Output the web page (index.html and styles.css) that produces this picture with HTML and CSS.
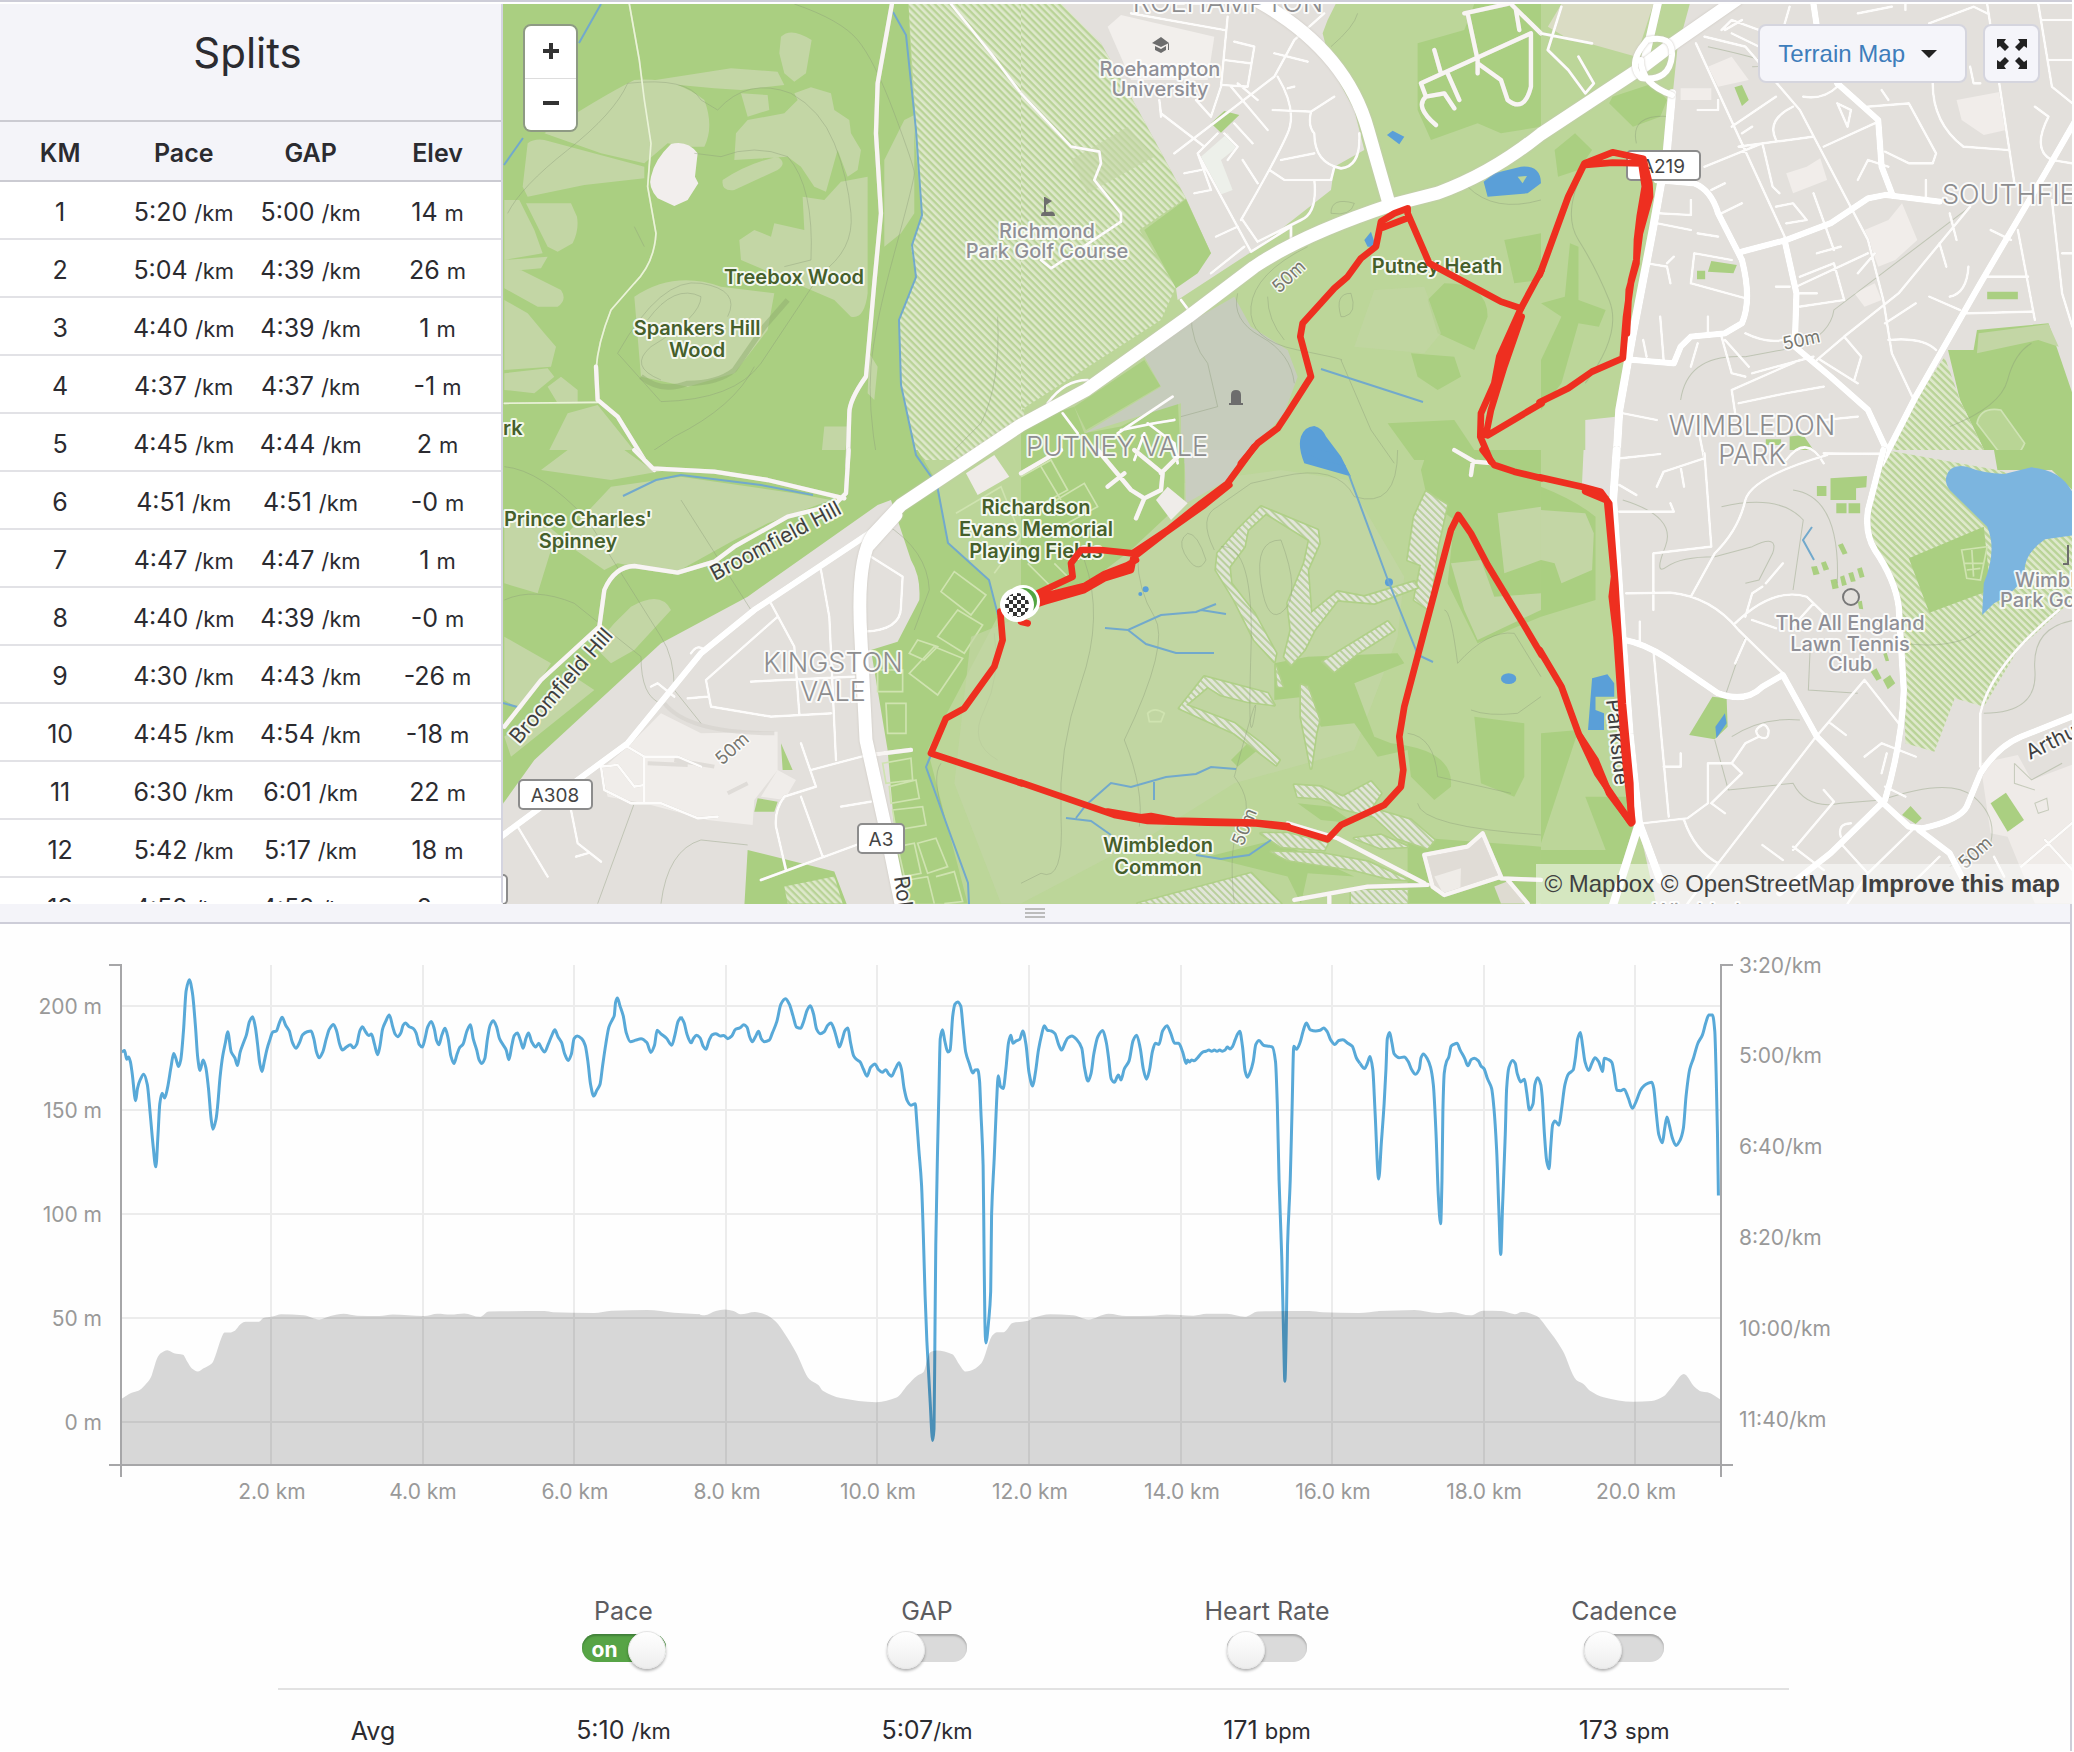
FILE: index.html
```html
<!DOCTYPE html>
<html lang="en">
<head>
<meta charset="utf-8">
<meta name="viewport" content="width=device-width, initial-scale=1">
<title>Splits</title>
<link rel="stylesheet" href="styles.css">
</head>
<body>
<main class="activity">
  <div class="overview">
    <section class="splits">
      <h1 class="splits-title">Splits</h1>
      <table class="splits-table">
        <thead><tr><th scope="col">KM</th><th scope="col">Pace</th><th scope="col">GAP</th><th scope="col">Elev</th></tr></thead>
        <tbody>
          <tr><td>1</td><td>5:20 <small>/km</small></td><td>5:00 <small>/km</small></td><td>14 <small>m</small></td></tr>
          <tr><td>2</td><td>5:04 <small>/km</small></td><td>4:39 <small>/km</small></td><td>26 <small>m</small></td></tr>
          <tr><td>3</td><td>4:40 <small>/km</small></td><td>4:39 <small>/km</small></td><td>1 <small>m</small></td></tr>
          <tr><td>4</td><td>4:37 <small>/km</small></td><td>4:37 <small>/km</small></td><td>-1 <small>m</small></td></tr>
          <tr><td>5</td><td>4:45 <small>/km</small></td><td>4:44 <small>/km</small></td><td>2 <small>m</small></td></tr>
          <tr><td>6</td><td>4:51 <small>/km</small></td><td>4:51 <small>/km</small></td><td>-0 <small>m</small></td></tr>
          <tr><td>7</td><td>4:47 <small>/km</small></td><td>4:47 <small>/km</small></td><td>1 <small>m</small></td></tr>
          <tr><td>8</td><td>4:40 <small>/km</small></td><td>4:39 <small>/km</small></td><td>-0 <small>m</small></td></tr>
          <tr><td>9</td><td>4:30 <small>/km</small></td><td>4:43 <small>/km</small></td><td>-26 <small>m</small></td></tr>
          <tr><td>10</td><td>4:45 <small>/km</small></td><td>4:54 <small>/km</small></td><td>-18 <small>m</small></td></tr>
          <tr><td>11</td><td>6:30 <small>/km</small></td><td>6:01 <small>/km</small></td><td>22 <small>m</small></td></tr>
          <tr><td>12</td><td>5:42 <small>/km</small></td><td>5:17 <small>/km</small></td><td>18 <small>m</small></td></tr>
          <tr><td>13</td><td>4:52 <small>/km</small></td><td>4:52 <small>/km</small></td><td>2 <small>m</small></td></tr>
        </tbody>
      </table>
    </section>
    <section class="map" aria-label="Route map">
      <svg class="map-canvas" viewBox="502 4 1569 900" preserveAspectRatio="xMidYMid slice" aria-hidden="true">
        <defs>
          <pattern id="hatch" width="15" height="15" patternUnits="userSpaceOnUse" patternTransform="rotate(-45)"><rect width="15" height="15" fill="#b9d397"/><rect width="8" height="15" fill="#dee8cb"/></pattern>
          <pattern id="fairway" width="15" height="15" patternUnits="userSpaceOnUse" patternTransform="rotate(-45)"><rect width="15" height="15" fill="#b9cf9c"/><rect width="9" height="15" fill="#e1e5d8"/></pattern>
          <pattern id="check" width="8" height="8" patternUnits="userSpaceOnUse"><rect width="8" height="8" fill="#fff"/><path d="M0 0h4v4H0zM4 4h4v4H4z" fill="#333"/></pattern>
        </defs>
        <rect x="500" width="1574" height="908" fill="#bcd699"/>

        <!-- Land cover -->
        <g transform="translate(500 0) scale(.3333)">
          <path class="wood" d="M0 0H1222L1240 400 1262 650 1230 740 1245 830 1195 960 1200 1150 1250 1390H0z"/>
          <path class="pale" d="M130 400Q300 290 400 240 520 230 610 300 640 380 610 440L560 440 500 430 430 490 300 460zM80 430Q100 415 130 420L430 500V535L250 555 80 590 65 560zM75 610H210L228 650Q235 690 215 730L170 755 140 740zM10 600H55L100 690 125 760 10 780zM10 780 140 770 120 805 10 815zM10 810 60 810 180 870Q200 900 170 920L110 920 10 865zM10 900 80 940 130 1000 165 1040 150 1100 10 1110zM10 1120 140 1105 160 1130 100 1180 10 1170zM140 1160 180 1130 230 1170V1210L170 1210zM130 1380 200 1240 290 1215 430 1390zM430 245 690 205 830 215 850 255 720 270 640 265zM840 110Q870 80 932 120L915 220 880 245 850 220 835 160zM720 280 800 285 805 330 740 350zM705 400 740 360 850 340 890 300 880 280 930 262 990 280 1000 330 1045 360 1050 400 1080 450 1070 510 1040 530 1010 450 975 575 940 560 900 500 860 470 700 480zM665 540Q740 490 830 470 860 490 830 510L700 570Q660 575 665 540zM1020 545 1100 530V880Q1090 960 1050 950L1000 900 930 870 720 780 715 720 760 690 810 710 820 670 910 690 905 590 970 600zM400 890Q520 810 660 860L820 880 800 990 700 1120 560 1160 420 1130zM1150 480 1210 360 1240 345V640L1200 700 1150 740zM960 1380 970 1280 1040 1280 1030 1390zM1105 1060 1130 1100 1120 1200 1100 1180z"/>
          <path class="hill" d="M420 1130Q480 1180 560 1150 650 1150 700 1110L790 980 860 900"/>
          <path d="M510 432Q560 420 590 460L582 530 592 550 560 600 520 618 470 595Q440 560 450 530 460 480 510 432z" fill="#f2eeed"/>
          <path fill="url(#hatch)" d="M1222 0H1570V1290L1390 1380H1250L1200 1150 1195 960 1245 830 1230 740 1262 650z"/>
          <path class="contour" d="M880 12Q1020 60 1070 120T1180 340 1240 520 1180 760 1110 1100 1130 1390M20 640Q60 560 200 450T380 250Q560 230 600 300L650 330Q740 230 870 280 960 330 1000 430T1050 640 960 820L780 1090Q700 1200 480 1205L350 1060Q480 830 600 850T680 950M580 460 660 470Q760 430 860 470 940 560 930 780L850 800M440 960Q520 850 600 890 600 950 450 1040 380 1100 480 1140M430 1370 520 1310Q700 1220 760 1100M1490 950Q1500 1150 1440 1270L1360 1350M400 680 430 740"/>
        </g>
        <g transform="translate(1020 0) scale(.3333)">
          <path fill="url(#hatch)" d="M0 0H120L240 130 330 290 495 595 355 690 465 860 420 960 0 1230z"/>
          <path class="town" d="M110 0H950L920 60 905 100 930 200 1000 330 1030 450 940 500 930 570 700 750 470 900 465 865 570 760 495 595 330 290 240 130z"/>
          <path class="wood" d="M370 690 495 598 570 760 530 820 465 865zM570 370 610 333 655 345 600 398zM1190 130 1330 90 1360 12H1560V380L1440 400 1370 370 1230 420 1190 330zM1270 850Q1400 850 1400 950L1360 1050 1250 1000 1220 900zM1170 1060 1300 1070 1320 1130 1250 1170 1190 1130zM1100 1270 1300 1260 1380 1380H1180zM1450 720 1560 700V840L1480 850zM0 1270 160 1220 190 1300 300 1280 470 1190 480 1390H0z"/>
          <path class="pale" d="M1060 870 1210 860 1260 1000 1210 1060 1000 1040zM150 480 320 380 400 470 200 580z" opacity=".6"/>
          <path d="M640 890 500 970 370 1070 420 1160 190 1300 480 1210V1390H660L790 1240 830 1130 800 1050 690 980z" fill="#c6ccbc"/>
          <path class="wood" d="M370 1080 418 1158 195 1290 160 1220z"/>
          <path d="M260 80 300 45 580 110 560 240H330z" fill="#f2efec"/><path d="M540 470 620 400 650 440 600 480 635 570 595 585z" fill="#edf0ea"/>
          <path class="water" d="M1098 405 1115 392 1150 410 1135 433zM1388 545 1420 520 1500 500Q1560 495 1560 550L1520 580 1400 590zM1030 720 1050 695 1065 740 1040 740zM840 1310Q850 1280 880 1278 905 1285 915 1310L960 1370 990 1430 850 1390Q830 1340 840 1310z"/>
          <path d="M1490 530 1518 528 1505 550z" fill="#bcd699"/>
          <path class="contour" d="M650 880Q630 960 720 1010T820 1150M860 740Q700 820 690 920T830 1050 960 1080L1050 1290 1120 1390M740 890Q740 960 790 1020M1010 40Q1000 80 930 140M1340 560Q1420 640 1560 600M510 940Q510 1030 560 1090L590 1220 480 1250M930 640Q930 590 1000 610 990 650 930 640zM960 950Q940 880 990 880 1010 940 970 950z"/>
        </g>
        <g transform="translate(1540 0) scale(.3406 .3333)">
          <path class="town" d="M440 0H1570V1390H130V1260L220 1250 385 300 400 150z"/>
          <path d="M60 12H330L280 170 70 110 20 80z" fill="#dadcc4"/>
          <path class="wood" d="M210 290 330 250 370 300 350 350 270 380 200 310zM40 450 100 400 150 450 110 510 50 530zM85 730 110 740 110 900 190 930 170 980 110 970 60 1150 0 1230V1080L60 950 0 910 70 890zM568 262 590 255 610 300 590 318zM500 783 575 795 565 820 490 815zM458 812H482V838H458zM1310 875H1400V898H1310zM1195 1050 1270 1050 1280 990 1490 970 1560 1180V1390H1320L1230 1200z"/>
          <path class="pale" d="M1280 1060 1285 1000 1490 972 1520 1040 1460 1020z"/>
          <path class="wood" d="M660 1318H705V1335H660zM730 1310 770 1305 800 1350 790 1372 730 1365z"/>
          <path fill="url(#hatch)" d="M1185 1070 1230 1200 1320 1390H1000L1100 1200z"/>
          <path d="M490 200 560 170 610 240 520 260zM720 520 780 500 820 475 840 540 740 580zM1220 300 1350 275 1365 390 1300 405 1235 360zM950 690 1020 660 1060 610 1105 720 1040 780 990 800zM920 880 980 850 1000 900 950 920zM410 265H500V300H410z" fill="#f1edea"/>
          <path class="contour" d="M380 350Q260 340 280 430M130 500Q60 640 110 720T200 900 130 1150M1440 1030Q1390 1060 1370 1140T1200 1280M410 1200Q430 1060 600 1070L760 1040Q850 1000 860 930L1260 620M490 140Q760 200 620 200"/>
          <path d="M1280 1270Q1290 1220 1350 1230L1420 1330Q1400 1380 1360 1370L1340 1350z" fill="#b9d595" stroke="#cfe3b4" stroke-width="5"/>
        </g>
        <g transform="translate(500 450) scale(.3333)">
          <path class="wood" d="M0 0H1250L1310 100 1340 280 1465 390 1490 500 1280 900 1400 1361H1150L1100 600 0 1060z"/>
          <path class="pale" d="M120 60 200 0H370L440 50 500 60 330 90zM330 110 540 80 880 130 990 150 800 220 700 270 520 370 350 340 310 360 180 270zM10 180 120 210 180 260 150 300 110 430 10 400zM390 470Q480 420 510 480L400 600 330 640 280 590 340 520zM10 560 150 640 60 780 10 750zM10 860 220 680 280 720 30 920z"/>
          <path class="town" d="M0 1070 100 930 480 580 740 440 1130 165 1170 150 1230 330Q1260 380 1255 450L1190 575 1110 600 1160 900 1200 1370H0z"/>
          <path d="M480 790 600 850 830 845V960L760 1050 755 1125 620 1110 430 1060 320 1040 300 960 380 890zM780 1040 830 960 885 990 850 1050z" fill="#f0edea"/>
          <path d="M490 760Q560 850 820 850M520 930 640 950M440 940 560 945M680 1030 740 1000" fill="none" stroke="#d3d0cc" stroke-width="12" opacity=".6"/>
          <path class="wood" d="M840 880 875 960H845zM770 1045 830 1055 820 1085H760zM740 1200 1000 1265 1040 1370H730z"/>
          <path fill="url(#hatch)" d="M850 1310 1000 1280 1025 1361H860z"/>
          <path d="M1395 70 1480 15 1525 80 1430 135z" fill="#efebe8"/>
          <path class="contour" d="M10 50Q120 60 260 210L480 560Q520 620 520 720L600 820M10 450Q100 410 220 460L420 620Q420 740 480 760M540 150 750 480M480 1361Q500 1200 600 1170L740 1185M400 1060 290 1361M1150 220Q1280 300 1285 420L1240 540M1320 940Q1290 980 1330 1100M1480 550Q1500 680 1450 780T1490 930"/>
          <path class="pitch" d="M1360 365 1455 435 1410 495 1320 425zM1370 480 1445 525 1390 610 1310 560zM1300 590 1385 625 1310 735 1225 670zM1130 660H1205V725H1130zM1155 760H1215V850H1160zM1145 940 1230 925 1235 990 1155 1000zM1165 1010 1245 990 1255 1045 1170 1060zM1175 1080 1265 1070 1275 1125 1185 1140zM1190 1190 1240 1180 1260 1270 1210 1280zM1250 1180 1305 1165 1340 1250 1280 1270zM1220 1290 1280 1280 1300 1361M1305 1280 1360 1265 1385 1355 1330 1361M1250 570 1310 590 1270 630 1225 610zM1365 190 1500 110 1560 260 1480 370"/>
        </g>
        <g transform="translate(1020 450) scale(.3333)">
          <path class="pale" d="M-150 560 0 500 220 300 480 100 780 60 980 90 1150 380 1130 560 1000 900 640 1000 400 1150 0 1361H-60L-200 1000z" opacity=".7"/>
          <path class="wood" d="M0 0H490V150L330 300 200 400 0 440zM1220 0H1560V500L1370 580 1280 400 1300 210 1220 150 1200 60zM760 640 860 620 1130 610 1150 640 1000 700 1060 860 1110 880Q1300 900 1290 1010L1240 1050 1170 980 1160 900 1070 920 1000 820 900 830 850 740 760 750zM1360 800 1510 820V980L1480 1040 1380 1000zM630 930 690 870 710 900 650 950zM1160 1160 1560 1190V1361H1160zM760 1170 1000 1280 860 1270 840 1361 800 1280 560 1220zM830 1060 930 1070 1000 1120 900 1110z"/>
          <path class="pale" d="M1430 190 1560 170V330L1450 370zM1290 340 1380 330 1420 440 1560 430V480L1370 570 1330 480z"/>
          <path d="M490 0H680L620 90 495 160z" fill="#c9cdc0"/><path d="M405 150 440 110 500 160 450 210z" fill="#efece9"/>
          <g fill="url(#fairway)" stroke="#b0d088" stroke-width="10" stroke-linejoin="round" paint-order="stroke">
            <path d="M350 1361 690 1270 780 1361zM990 1320H1160V1361H990zM1215 125 1278 165 1250 290 1225 480 1180 450 1200 345 1160 330 1180 200z"/>
            <path d="M720 170 890 240 895 280 860 360 870 490 950 425 1030 440 1180 395 1190 412 1060 460 950 450 880 540 850 600 810 645 790 620 810 540 800 460 850 340 865 270 735 190 680 240 670 290 625 350 630 400 700 490 765 610 760 635 700 570 640 450 585 360 590 310 650 240z"/>
            <path d="M905 635 1100 515 1120 540 1010 610 940 665zM840 705 860 710 895 810 885 850 870 955 840 800zM765 650 785 710 770 710zM550 680 740 730 760 765 680 755 600 735 560 710 495 765 640 820 720 880 775 930 765 945 640 850 475 775z"/>
            <path d="M820 1005 900 1010 965 1040 1050 995 1080 1030 1050 1075 1170 1110 1240 1170 1220 1195 1130 1165 1060 1100 960 1075 900 1045 830 1040zM720 1150 800 1150 920 1180 910 1200 780 1190zM750 1205 900 1210 1040 1235 1160 1290 1100 1285 1000 1260 800 1230zM1000 1165 1080 1155 1160 1190 1080 1195z"/>
          </g>
          <path d="M1210 1215 1340 1190 1385 1150 1440 1280 1270 1335 1235 1310z" fill="#e0dcd6"/><path d="M1240 1280 1320 1255 1318 1325 1265 1328z" fill="#efece8"/><path d="M1420 1310 1470 1290 1510 1361H1440z" fill="#dedbd1"/>
          <path class="water" d="M840 0 900 0 940 10 975 48 900 30z"/><ellipse class="water" cx="1463" cy="686" rx="23" ry="16"/><circle class="water" cx="1104" cy="397" r="12"/><circle class="water" cx="374" cy="418" r="9"/><circle class="water" cx="358" cy="432" r="6"/>
          <path class="contour" d="M190 330Q250 500 180 700T120 1100 60 1270L0 1300M350 320Q350 420 400 500T310 870Q370 1020 355 1130M580 300Q530 200 590 170L690 100 780 80Q950 40 1000 140 1130 180 1130 0M780 270Q700 270 720 400T790 480 780 270M600 290Q700 280 690 600T700 800 640 980Q700 1060 660 1120T640 1361M1160 850Q1240 860 1250 980L1470 1030M1270 480Q1290 480 1310 640 1400 540 1480 550L1560 680M1350 780Q1400 800 1490 790L1560 740M1190 1060Q1200 1130 1560 1155M500 250Q530 250 555 330 530 380 490 310 470 270 500 250z"/>
          <path class="pitch" d="M0 80 90 30 140 120 30 180M60 50 120 150M90 160 190 100 230 170 120 230M20 340 100 420M100 340 150 390M380 790Q400 770 430 790L420 815H385z"/>
        </g>
        <g transform="translate(1540 450) scale(.3406 .3333)">
          <path class="town" d="M125 0H1570V1370H340L285 1120 215 300 205 140 120 110z"/>
          <path class="wood" d="M0 110Q100 150 160 200V450L0 500zM0 850 110 840 0 1180zM130 1040 250 1040 270 1130 210 1370H0V1200L190 1200zM850 85 957 78 955 112 925 115V150H850zM810 108H838V138H810zM867 160H897V190H867zM903 160H937V190H903zM503 740 545 745 548 830 510 868 435 855zM1060 1095 1085 1068 1118 1105 1100 1122zM1330 0H1570V130L1500 60 1340 60z"/>
          <path class="wood" d="M793 350 810 348 818 372 800 376zM822 338 836 334 846 358 830 362zM850 390 868 386 874 414 856 418zM878 380 890 376 898 404 884 408zM902 370 916 366 924 394 910 396zM928 356 942 352 950 380 936 384zM872 285 886 280 900 310 886 314zM930 455 942 452 946 478 934 476zM968 665 985 655 1000 685 985 692zM1004 690 1025 675 1040 700 1018 718zM1005 612 1015 608 1022 632 1012 634z"/>
          <path class="pale" d="M0 180 130 190 155 250 150 360 60 400 40 340 0 330z"/>
          <path fill="url(#hatch)" d="M1010 0 1340 60 1570 130V440L1400 600 1300 770 1215 745 1155 905 1070 880 1060 560 1040 420 960 260 970 120z"/>
          <path class="wood" d="M1080 325 1300 230 1320 420 1140 488z"/>
          <path d="M1190 80Q1200 40 1250 50 1300 70 1360 72L1440 52Q1540 60 1570 150V255L1480 268Q1420 310 1420 360 1410 420 1330 460L1295 495 1300 400Q1340 300 1310 230L1200 120Q1185 100 1190 80z" fill="#7cb5df"/>
          <path class="water" d="M150 685 195 673 215 700V740H160V780L185 790V840H138zM512 830 540 790 545 820 515 865z"/>
          <path d="M1290 940 1400 915 1440 990 1570 940V1361H1450L1370 1160 1320 1150z" fill="#efebe8"/><path class="wood" d="M1320 1060 1365 1028 1418 1110 1370 1145z"/>
          <path class="contour" d="M240 150Q400 200 365 290T370 350 510 320L620 290Q700 250 680 310L640 390 600 400M530 170Q700 130 770 210L740 420M740 120Q880 140 870 400M540 740 600 560M510 870 550 1020 740 1000Q780 1080 880 1060L1000 1050Q1200 980 1270 1040T1320 1180L1200 1250M790 600 785 720 930 730M1570 510Q1440 530 1450 660T1300 790M560 860Q650 800 760 810M1060 580Q1220 600 1290 540M1390 940V1000L1450 1020M1390 940 1440 990 1530 940M1450 1060 1485 1045 1490 1080 1460 1090z"/>
          <path class="pitch" d="M1235 300 1310 290 1290 390 1250 385zM1240 340H1300M1250 360 1290 355M1265 300 1270 380"/>
        </g>

        <!-- Streams -->
        <path class="stream" d="M600 4 578 43M522 138 503 165M892 12 905 35 915 130 921 215 911 245 915 277 898 320 900 385 915 455 936 485 947 543 988 580 997 615M930 755 925 767 943 817 967 883 968 904M1320 369 1422 402M1348 475 1388 583 1417 655 1432 662M622 496 655 480 680 475 760 485 812 495M502 703 520 708M1104 628 1127 630 1160 615 1195 612 1215 604M1200 610 1225 614M1127 630 1145 644 1175 653 1213 653M1065 818 1090 821 1110 835M1075 818 1085 805 1110 783 1130 787 1165 777 1195 774 1210 767 1235 769M1153 782V800M1195 855 1220 859 1248 855 1270 840M1811 527 1802 540 1813 560"/>

        <!-- Streets -->
        <g transform="translate(500 0) scale(.3333)" class="roads">
          <path class="track" d="M385 12 415 180 430 300 450 430 440 560 465 700Q460 790 400 850L330 930Q290 1030 285 1110M10 1210 290 1207"/>
          <path class="lane" d="M285 1100 290 1200 350 1250 430 1380 460 1410M1175 0 1130 250 1125 400 1140 640 1120 850 1095 1130Q1045 1200 1045 1240L1040 1400"/>
          <path class="street" d="M1350 12 1470 160 1560 280"/>
        </g>
        <g transform="translate(1020 0) scale(.3333)" class="roads">
          <path class="street" d="M0 280 150 440 235 455 240 490 220 540 300 640 300 665 90 805 60 780M330 40 610 90M620 50 600 260 570 350M640 125 700 140 680 260 605 255M610 180 690 190M460 460 760 230 820 120 910 40M760 160 860 185M415 300 420 340 550 440M770 230Q830 330 800 400T660 660M755 330 870 335 940 290M870 335Q860 380 880 400 880 490 960 505 1020 500 1015 400M780 480 880 460M745 510 790 540 930 540 940 500M880 540Q890 640 840 660L710 725 665 660M525 300 570 350M630 260 740 390M640 370 695 430M530 460 690 755 810 680V720M590 400 530 460 570 570 520 580M490 520 540 510M610 400 650 440 620 480M585 710 650 680M570 820 670 740M820 260 800 265M665 480 710 550M650 250 710 300M420 350 415 300"/>
          <path class="lane" d="M1340 40 1370 180 1370 220M1330 40 1460 12M1470 12 1560 100M1200 250 1530 100V260Q1510 340 1460 300L1440 240 1370 190M1240 150 1260 220M1280 220 1315 300M1200 250 1215 290 1270 280 1300 325M1215 290Q1180 320 1245 375M1485 30 1495 90"/>
          <path class="street" d="M80 1210Q130 1140 200 1140M125 1240 170 1300M290 1300 455 1190M300 1290 400 1270 460 1260M380 1270 460 1330 470 1390M370 1300 340 1380M480 900 510 940"/>
        </g>
        <g transform="translate(1540 0) scale(.3406 .3333)" class="roads">
          <path class="street" d="M60 20 20 150 80 210 130 280 155 250 110 170M0 100 150 130M455 130 720 720M480 110 600 140 760 330 960 720 1005 900 1030 1060 1090 1190M560 380 690 290M580 440 800 410M830 440 980 370M690 420Q660 360 740 320M460 330H520V300M480 500 650 430 680 560 700 580M590 400 620 380M530 90 560 60 640 90M560 100 640 140M540 90 590 60M710 90 730 20M770 290Q830 300 870 260M870 310 900 380 910 330 870 310M960 320 1080 310 1160 460 1150 490 1080 490 1010 455M1150 250Q1150 370 1240 440L1370 450M1310 12 1390 550M1460 12 1500 260 1560 310M1470 60H1560M1490 180H1560M1140 70 1270 20 1310 40M1450 320 1490 350Q1440 450 1500 480L1560 490M1070 12V30M930 40 1030 20M350 640 440 645V600M340 670 440 690M460 700 520 710M530 640 590 610M500 570 540 550M310 790 370 800 380 850M370 790 390 770M440 850 450 760 560 780M440 850 600 895M760 830 860 790 890 900 760 920M760 880H810M750 860 960 760M690 860H730M930 820 980 760M800 580 860 750M690 620 740 610 780 660 720 670M810 760 880 740M1130 540V600M1020 500 960 480 930 540M1170 730 1190 800M1200 640 1220 720M1310 830H1430M1250 940 1440 935M1400 690 1450 960M1140 890 1230 930M1320 690 1380 720M1500 600 1530 880 1560 980M1530 760H1560M1010 970 1100 910M1020 1020Q1120 1010 1160 1050M300 1020 310 1070M350 950 360 1080M440 1100 460 1030M530 1010 560 1120 600 1130M540 1020 610 1100M490 950V1000M600 1000Q680 1040 740 1010M810 1080 890 1010 1050 880 1260 620M890 1010 940 1070 920 1140M820 1080 930 1150M560 1170 760 1080M580 1210 720 1180 830 1160M570 1240 560 1170M620 1120 800 1070M240 1240 340 1260M460 1280 480 1380M720 1380Q780 1300 830 1390M830 1360H1000M830 1260 930 1250M1290 250H1270L1260 200M1200 890Q1250 880 1255 800M1000 270 1020 300"/>
          <path class="avenue" d="M340 540 450 550Q500 570 520 640L590 780Q620 900 590 970L540 1000 440 1010 410 1040 390 1090 270 1080M590 755 720 720 850 670 960 595 1010 585 1170 605M715 720 750 880 745 1040 850 1130 960 1230 1010 1340M1570 360 1480 520 1290 850 1100 1190 1000 1390M870 250 990 360 1000 500 1030 580M800 12 810 80 870 250"/>
          <path class="main" d="M385 280 370 450 330 680 270 1000 230 1230 220 1400M345 0 300 200"/>
        </g>
        <g transform="translate(500 450) scale(.3333)" class="roads">
          <path class="lane" d="M400 0 455 55 640 65 800 90 1030 145M1043 0 1035 130 1000 165 860 200 700 290 640 335 530 368 400 348Q340 350 310 420L295 530 120 690 10 830"/>
          <path class="street" d="M960 360 985 500 1005 930M810 460 880 590 895 790M830 500 615 690 630 770 810 800 990 790M560 745 620 740M450 710 470 700 520 740M1110 320 1205 380 1200 470Q1200 540 1090 545M750 695 1060 680M900 880 945 1010 850 1040Q820 1080 825 1130L855 1260M930 960 1100 915M900 1040 965 1220M780 1290 1080 1180M1020 1070 1110 1055M50 1130 140 1280M210 1080 230 1180 300 1235M225 1220 260 1210M370 885 430 920 430 1060M430 920 530 920 600 950M300 950 310 1020 390 1060 480 1060 590 1105 650 1100M300 950 350 945 400 1010 430 1005M570 610Q590 580 610 600"/>
          <path class="avenue" d="M1120 240 760 480 600 610 380 880 230 990 0 1160"/>
          <path class="lane" d="M1110 915 1230 900"/>
        </g>
        <g transform="translate(1020 450) scale(.3333)" class="roads">
          <path class="lane" d="M0 70 120 0M230 0 330 120 370 145 420 120 425 70 340 0M420 70 470 20M370 145 345 205M260 110 310 70M800 1120 950 1165 1210 1300M820 1350 1040 1310 1220 1305M925 1340V1361M1210 1215 1340 1190 1385 1150 1440 1280 1270 1335 1235 1310zM1440 1285 1560 1290M1460 1290 1520 1361M1300 0 1360 35 1420 40M1350 75 1355 40"/>
        </g>
        <g transform="translate(1540 450) scale(.3406 .3333)" class="roads">
          <path class="street" d="M480 10 500 290 330 310 330 480M830 10 1000 12M840 15Q620 80 600 150 580 240 510 310L440 440M230 25 350 12M230 185 390 185 380 160M230 105 280 135M340 110 360 65 480 25M410 50 420 110M250 430 380 428Q500 440 580 540L710 670M570 520Q680 410 780 440L830 490M600 500 620 430 650 410M660 400 710 340M620 510 690 535M570 640 600 570M330 600 375 1100M250 570 290 575 290 515M360 950H410V910M300 1120 430 1105 490 1060V940H560L600 880 640 860M560 940 590 970 500 1060 540 1090M420 1110Q450 1200 520 1240L800 870 950 690M520 1240 430 1361M950 690 1050 820M850 820 895 855M800 460 730 540M950 920 1000 880 1100 920M1015 910 1000 970M1010 1010 1070 1040M740 1200 860 1055 830 1020M650 1185 710 1230M740 1190 830 1260M880 1180 960 1270M1090 1140 960 1270 900 1361M1410 1250 1570 1110M1480 1170 1560 1260M1520 480Q1320 650 1290 790V950M1170 1220 1100 1290M1330 1220 1360 1280"/>
          <path d="M650 825Q620 840 640 860 670 875 668 840 660 822 650 825zM880 1160Q870 1120 910 1120" class="street"/>
          <path class="avenue" d="M245 570Q300 580 370 625L520 730Q600 760 650 710L710 675 810 860 1000 1055 1080 1130 1120 1135Q1230 1110 1250 1070L1290 970Q1340 890 1410 860L1570 795M1005 0 960 180Q950 250 980 300 1040 390 1050 470L1065 720Q1060 880 1010 1050L850 1210 700 1330M1110 1140 1200 1210 1240 1290"/>
          <path class="main" d="M222 0 212 150 235 500 260 850 288 1120 210 1370M288 1120 350 1290"/>
        </g>
        <g class="roads trunk">
          <path d="M900 904 885 830 865 740 860 640Q855 560 872 535L900 505 960 465 1020 425 1085 390 1187 317 1253 267Q1300 235 1390 205L1437 193Q1490 174 1540 134L1640 68 1673 43 1735 0"/>
          <path d="M1255 0Q1345 50 1367 130L1387 200M895 515 868 545"/>
        </g>
        <g class="roads junction">
          <path d="M1640 60Q1640 84 1671 95M1646 40Q1672 34 1671 55 1669 82 1640 78 1628 66 1640 48z"/>
        </g>

        <!-- Place names and road shields under the route -->
        <g class="district">
          <text x="1227" y="12">ROEHAMPTON</text><text x="1116" y="456">PUTNEY VALE</text>
          <text x="1751" y="435">WIMBLEDON</text><text x="1751" y="464">PARK</text>
          <text x="1941" y="204" class="from-left">SOUTHFIELDS</text>
          <text x="832" y="672">KINGSTON</text><text x="832" y="701">VALE</text>
        </g>
        <g class="park">
          <text x="793" y="284">Treebox Wood</text><text x="696" y="335">Spankers Hill</text><text x="696" y="357">Wood</text>
          <text x="502" y="435" class="from-left">rk</text><text x="577" y="526">Prince Charles'</text><text x="577" y="548">Spinney</text>
          <text x="1035" y="514">Richardson</text><text x="1035" y="536">Evans Memorial</text><text x="1035" y="558">Playing Fields</text>
          <text x="1436" y="273">Putney Heath</text><text x="1157" y="852">Wimbledon</text><text x="1157" y="874">Common</text>
        </g>
        <g class="poi">
          <text x="1159" y="76">Roehampton</text><text x="1159" y="96">University</text>
          <text x="1046" y="238">Richmond</text><text x="1046" y="258">Park Golf Course</text>
          <text x="1849" y="630">The All England</text><text x="1849" y="651">Lawn Tennis</text><text x="1849" y="671">Club</text>
          <text x="2014" y="587" class="from-left">Wimbledon</text><text x="1999" y="607" class="from-left">Park Golf</text>
        </g>
        <g class="street-name">
          <text transform="translate(714 581) rotate(-28)">Broomfield Hill</text>
          <text transform="translate(518 745) rotate(-49)">Broomfield Hill</text>
          <text transform="translate(1605 700) rotate(84)">Parkside</text>
          <text transform="translate(2029 760) rotate(-26)">Arthur Road</text>
          <text transform="translate(893 877) rotate(82)">Robin Hood</text>
          <text x="1652" y="919">Wimbledon</text>
        </g>
        <g class="elevation-name">
          <text transform="translate(1278 294) rotate(-43)">50m</text><text transform="translate(1783 350) rotate(-12)">50m</text>
          <text transform="translate(721 766) rotate(-42)">50m</text><text transform="translate(1242 847) rotate(-68)">50m</text>
          <text transform="translate(1964 870) rotate(-42)">50m</text>
        </g>
        <g class="shield">
          <rect x="1626" y="151" width="73" height="29" rx="4"/><rect x="518" y="780" width="73" height="29" rx="4"/>
          <rect x="857" y="824" width="46" height="29" rx="4"/><rect x="486" y="875" width="20" height="29" rx="4"/>
          <text x="1662" y="173">A219</text><text x="554" y="802">A308</text><text x="880" y="846">A3</text>
        </g>
        <g fill="#6d6d6d">
          <path d="M1151 43 1160 37 1168 43 1160 47zM1154 46 1160 49 1165 46V50L1160 53 1154 50zM1167 44V50H1168V43z"/>
          <path d="M1043 197H1044L1051 201 1045 205V212H1047Q1054 210 1054 216H1040Q1040 212 1043 212z"/>
          <path d="M1228 405H1242V403H1240V395Q1240 390 1235 390T1230 395V403H1228z"/>
          <path d="M2066 545H2068V565H2062V563H2066z"/>
        </g>
        <circle cx="1850" cy="597" r="8" fill="none" stroke="#777" stroke-width="2"/>

        <!-- Recorded route -->
        <g class="route">
          <path transform="translate(500 450) scale(.3333)" d="M1498 485 1505 570 1480 650 1390 775 1335 805 1290 910 1562 1000"/>
          <g transform="translate(1020 450) scale(.3333)">
            <path d="M0 998 150 1050 280 1095 380 1113 560 1118 700 1120 800 1132 920 1168 960 1125 1090 1065 1140 1010 1147 960 1135 860 1150 770 1240 430 1290 240 1312 195 1350 250 1400 345 1500 510 1562 615"/>
            <path d="M260 1085 360 1102 390 1098 460 1112 700 1118 800 1128"/>
            <path d="M700 -10 620 100 540 160 440 240 335 310 240 300 180 300 150 340 155 380 50 430 0 460M340 310 330 360 250 385 190 420 70 455 0 478M625 105 550 165 430 250 340 320M345 330 320 345 250 372 190 408 60 440M0 515 20 520"/>
            <path d="M1385 0 1420 45 1480 65 1562 85"/>
          </g>
          <g transform="translate(1540 450) scale(.3406 .3333)">
            <path d="M-4 600 60 710 110 850 165 970 265 1120 262 1000 240 760 225 520 218 400 200 160 175 125 120 110 -4 82"/>
            <path d="M268 1115 245 900 222 560 208 440 215 380 195 160M115 860 160 930 200 1030 262 1115M130 124 190 150"/>
          </g>
          <g transform="translate(1020 0) scale(.3333)">
            <path d="M1410 1385 1378 1310 1380 1240 1420 1150 1435 1070 1500 925 1562 810M1395 1305 1410 1230 1450 1100 1502 950M1400 1306 1562 1210M1430 1150 1465 1020 1490 960"/>
            <path d="M1500 925 1440 905 1225 790 1160 640 1160 625 1120 640 1080 665 1065 740 1020 775 980 830 940 865 845 970 838 1010 870 1130 800 1240 770 1285 710 1330 660 1390M1165 652 1085 683"/>
          </g>
          <g transform="translate(1540 0) scale(.3406 .3333)">
            <path d="M-4 1207 80 1165 150 1115 240 1075 250 950 265 840 280 780 290 700 320 590 318 550 300 476 210 457 128 490 80 590 -4 825M130 495 210 488 295 490 305 560 290 650 282 720 280 790 258 870 252 1000"/>
          </g>
        </g>
        <circle cx="1022" cy="602" r="17" fill="#fff"/><circle cx="1023" cy="601" r="13" fill="#54a543"/>
        <circle cx="1016" cy="605" r="17" fill="#fff"/><circle cx="1016" cy="605" r="12" fill="url(#check)"/>
      </svg>
      <div class="zoom-control">
        <button type="button" aria-label="Zoom in"><svg viewBox="0 0 16 16"><path d="M0 8H16M8 0V16"/></svg></button>
        <button type="button" aria-label="Zoom out"><svg viewBox="0 0 16 16"><path d="M0 8H16"/></svg></button>
      </div>
      <div class="map-actions">
        <button type="button" class="map-button map-style">Terrain Map<svg viewBox="0 0 16 8" class="caret"><path d="M0 0H16L8 8z"/></svg></button>
        <button type="button" class="map-button fullscreen" aria-label="Full screen"><svg viewBox="0 0 30 30"><path d="M0 0H9L7 3 12 8 8 12 3 7 0 9zM30 0V9L27 7 22 12 18 8 23 3 21 0zM0 30V21L3 23 8 18 12 22 7 27 9 30zM30 30H21L23 27 18 22 22 18 27 23 30 21z"/></svg></button>
      </div>
      <p class="attribution"><a href="#mapbox">© Mapbox</a> <a href="#osm">© OpenStreetMap</a> <a href="#improve" class="improve">Improve this map</a></p>
    </section>
  </div>
  <div class="resizer"><svg viewBox="0 0 20 11"><path d="M0 1H20M0 5H20M0 9H20"/></svg></div>

  <section class="analysis">
    <svg class="chart" viewBox="0 0 2070 632" role="img" aria-label="Pace and elevation by distance">
      <path class="grid" d="M121 82H1721M121 186H1721M121 290H1721M121 394H1721M121 498H1721M271 41V541M423 41V541M574 41V541M726 41V541M877 41V541M1029 41V541M1181 41V541M1332 41V541M1484 41V541M1635 41V541"/>
      <g class="pace">
        <path transform="translate(0 -4) scale(.4464 .3827)" data-points="273 345,279 341,284 364,288 358,292 370,296 400,304 472,308 440,314 418,322 403,330 430,336 500,343 590,349 645,354 560,358 480,363 453,369 465,375 440,383 385,389 349,394 362,400 383,405 365,411 290,417 185,424 156,431 190,438 280,443 360,448 393,455 366,461 385,467 440,473 520,477 547,484 520,488 480,493 410,499 355,505 320,510 292,518 345,526 360,532 380,538 345,545 322,552 300,559 265,566 253,572 280,577 325,582 375,587 396,592 370,598 338,604 315,611 293,619 290,626 268,632 254,640 275,648 290,655 320,663 335,671 320,678 300,688 292,697 290,703 310,709 345,715 360,723 345,731 310,738 285,747 273,754 290,761 325,767 340,776 332,785 326,792 334,799 325,806 290,812 279,819 292,826 302,832 298,839 325,846 352,851 330,857 285,864 265,872 248,880 280,885 298,891 305,898 295,903 275,908 269,916 278,926 284,932 295,939 325,946 332,952 310,958 280,966 265,973 285,978 315,983 326,990 300,997 283,1004 310,1010 355,1017 375,1024 350,1030 333,1037 325,1046 290,1054 274,1060 310,1068 340,1073 365,1079 375,1086 362,1092 310,1098 275,1105 263,1112 278,1119 310,1128 328,1134 340,1140 365,1147 325,1152 302,1159 295,1166 315,1172 335,1178 310,1184 295,1191 318,1200 332,1207 322,1213 335,1220 345,1228 325,1236 302,1243 287,1250 305,1258 320,1265 350,1273 367,1280 350,1286 310,1293 303,1303 310,1311 328,1317 370,1323 430,1330 460,1337 445,1344 430,1350 380,1357 325,1364 280,1371 262,1376 250,1379 215,1383 204,1389 225,1396 250,1403 295,1412 318,1424 314,1436 310,1449 320,1458 346,1466 328,1472 288,1480 297,1493 309,1505 327,1512 300,1519 265,1526 253"/>
        <path transform="translate(680 -4) scale(.4464 .3827)" data-points="2 253,9 268,16 300,25 321,30 310,37 301,45 308,52 330,58 338,65 315,72 300,80 297,90 303,98 302,107 310,116 303,124 286,134 282,143 274,150 280,156 305,162 318,169 305,176 291,182 310,189 318,200 314,207 295,217 265,226 220,236 206,245 220,253 250,261 280,270 283,277 265,285 235,292 224,299 245,306 285,314 297,323 292,331 275,338 269,345 285,350 305,357 332,364 310,369 290,376 282,382 320,389 355,396 365,403 370,411 390,419 408,427 385,437 376,444 390,453 398,461 391,468 403,474 408,482 390,491 373,496 390,502 440,509 472,517 484,527 480,530 520,535 600,541 690,545 820,549 980,553 1100,560 1250,566 1360,569 1330,571 1100,573 850,577 600,580 450,583 310,588 287,593 315,600 345,605 340,611 250,616 220,622 214,629 225,634 280,640 345,648 375,656 400,661 392,667 391,671 420,674 500,679 640,681 850,683 1050,685 1105,692 1040,696 970,698 770,704 620,709 480,713 407,718 435,724 440,730 390,736 320,741 301,746 322,753 316,761 312,768 290,775 325,782 400,790 434,796 400,803 340,810 300,816 276,823 288,832 290,840 297,848 325,855 340,863 320,869 308,878 303,889 313,900 335,906 385,914 421,921 400,927 350,936 305,947 289,955 320,960 360,966 415,973 424,982 405,988 418,995 390,1006 368,1015 315,1023 301,1031 335,1038 390,1045 416,1052 390,1058 345,1065 322,1073 325,1081 290,1091 276,1099 295,1108 322,1117 322,1126 345,1134 375,1137 366,1141 371,1146 366,1152 368,1158 362,1165 352,1171 345,1178 343,1185 340,1191 343,1197 340,1203 343,1209 340,1215 343,1221 340,1226 332,1232 337,1238 330,1244 312,1249 298,1254 291,1260 330,1266 395,1271 411,1278 395,1284 370,1290 325,1297 315,1308 328,1320 330,1327 332,1334 370,1338 480,1342 680,1348 880,1352 1080,1355 1205,1358 1080,1361 850,1367 680,1371 500,1375 330,1381 338,1389 320,1396 290,1403 269,1412 287,1424 290,1434 288,1442 282,1450 292,1457 312,1467 325,1476 315,1485 313,1496 322,1506 330,1515 360,1523 375"/>
        <path transform="translate(1360 -4) scale(.4554 .3827)" data-points="0 375,10 388,16 375,22 357,28 390,33 500,41 677,47 580,53 480,57 390,60 310,65 294,70 320,75 350,86 360,97 358,106 370,113 390,122 403,130 390,134 360,139 350,148 363,155 385,161 430,167 560,172 720,177 794,180 680,182 500,185 400,190 370,195 358,200 330,206 325,213 322,220 340,230 362,237 381,244 365,251 361,260 368,266 382,272 388,280 415,289 440,294 490,300 600,305 760,309 874,313 750,319 560,322 440,327 385,335 367,341 375,345 400,353 423,361 416,366 450,372 496,380 480,384 430,390 412,397 430,400 460,405 560,410 630,415 650,419 590,423 535,428 525,437 536,442 500,450 430,458 402,468 392,473 360,478 310,484 294,489 330,494 370,502 393,509 375,516 360,524 370,533 396,536 361,546 365,553 372,558 400,564 445,572 446,580 442,589 465,598 492,606 475,616 445,624 433,632 427,641 424,645 440,651 510,656 560,664 582,669 545,674 515,679 535,686 570,694 589,703 575,710 545,716 460,724 390,732 362,742 322,752 300,759 270,766 248,774 248,779 290,782 400,785 560,787 720"/>
      </g>
      <g class="elevation">
        <path data-base="1424" transform="translate(0 -4) scale(.4464 .3827)" data-points="271 1252,295 1235,310 1230,325 1215,338 1195,345 1170,352 1145,360 1132,375 1124,390 1132,410 1136,420 1155,430 1172,443 1180,455 1172,475 1158,485 1130,495 1095,503 1078,515 1078,525 1074,540 1055,550 1050,580 1050,590 1040,610 1036,630 1030,680 1033,715 1044,740 1035,770 1029,800 1034,850 1035,880 1031,950 1035,980 1029,1010 1031,1040 1028,1075 1037,1095 1023,1220 1022,1240 1025,1330 1027,1370 1021,1450 1019,1510 1026,1568 1030"/>
        <path data-base="1424" transform="translate(680 -4) scale(.4464 .3827)" data-points="40 1030,55 1033,80 1022,100 1018,120 1022,135 1030,168 1024,195 1033,215 1050,235 1082,260 1130,290 1200,310 1215,320 1230,360 1249,440 1260,485 1248,510 1215,530 1192,545 1182,560 1130,575 1125,610 1135,625 1160,640 1180,650 1178,675 1158,700 1085,710 1077,725 1077,745 1053,780 1047,790 1040,830 1030,880 1033,915 1044,960 1029,1000 1035,1060 1034,1090 1031,1150 1034,1180 1029,1225 1029,1265 1037,1295 1023,1410 1022,1440 1025,1520 1027,1568 1022"/>
        <path data-base="1424" transform="translate(1360 -4) scale(.4554 .3827)" data-points="40 1022,120 1019,170 1027,200 1024,243 1033,270 1021,310 1022,340 1030,355 1024,388 1035,410 1065,445 1125,475 1202,490 1212,505 1230,535 1247,600 1259,640 1257,665 1246,685 1220,711 1186,735 1220,750 1232,763 1234,793 1254"/>
      </g>
      <path class="axis" d="M109 41H121V553M109 541H1733M1733 41H1721V553"/>
      <g class="tick y-left"><text x="102" y="90">200 m</text><text x="102" y="194">150 m</text><text x="102" y="298">100 m</text><text x="102" y="402">50 m</text><text x="102" y="506">0 m</text></g>
      <g class="tick"><text x="1739" y="49">3:20/km</text><text x="1739" y="139">5:00/km</text><text x="1739" y="230">6:40/km</text><text x="1739" y="321">8:20/km</text><text x="1739" y="412">10:00/km</text><text x="1739" y="503">11:40/km</text></g>
      <g class="tick x-axis"><text x="272" y="575">2.0 km</text><text x="423" y="575">4.0 km</text><text x="575" y="575">6.0 km</text><text x="727" y="575">8.0 km</text><text x="878" y="575">10.0 km</text><text x="1030" y="575">12.0 km</text><text x="1182" y="575">14.0 km</text><text x="1333" y="575">16.0 km</text><text x="1484" y="575">18.0 km</text><text x="1636" y="575">20.0 km</text></g>
    </svg>
    <table class="stats">
      <colgroup><col class="col-name"><col class="col-pace"><col class="col-gap"><col class="col-heart"><col class="col-cadence"></colgroup>
      <thead><tr>
        <td></td>
        <th scope="col"><label for="pace">Pace</label><span class="switch switch-on"><input type="checkbox" id="pace" checked><span>on</span></span></th>
        <th scope="col"><label for="gap">GAP</label><span class="switch"><input type="checkbox" id="gap"></span></th>
        <th scope="col"><label for="heart">Heart Rate</label><span class="switch"><input type="checkbox" id="heart"></span></th>
        <th scope="col"><label for="cadence">Cadence</label><span class="switch"><input type="checkbox" id="cadence"></span></th>
      </tr></thead>
      <tbody><tr><th scope="row">Avg</th><td>5:10 <small>/km</small></td><td>5:07<small>/km</small></td><td>171 <small>bpm</small></td><td>173 <small>spm</small></td></tr></tbody>
    </table>
  </section>
</main>
<script src="chart.js"></script>
</body>
</html>
```
FILE: styles.css
```css
* { box-sizing: border-box; }

body {
  margin: 0;
  background: #fff;
  color: #2b2b30;
  font: 25px/32px Inter, "Liberation Sans", sans-serif;
}

.activity {
  margin-right: 2px;
  border-top: 2px solid #cdcdd8;
}

.overview {
  display: flex;
  height: calc(50vh + 26px);
  padding-top: 2px;
}

/* Splits */
.splits {
  flex: 0 0 503px;
  overflow: hidden;
  border-right: 2px solid #d4d4e0;
  border-bottom: 2px solid #fff;
}

.splits-title {
  margin: 0;
  height: 118px;
  padding: 25px 6px 0 0;
  background: #f4f4f9;
  border-bottom: 2px solid #cbcbd2;
  font-size: 42px;
  font-weight: 400;
  line-height: 48px;
  text-align: center;
}

.splits-table {
  width: 100%;
  border-collapse: separate;
  border-spacing: 0;
  table-layout: fixed;
  text-align: center;
}

.splits-table th {
  height: 60px;
  padding: 4px 0 0;
  background: #f4f4f9;
  border-bottom: 2px solid #cbcbd2;
  font-weight: 600;
}

.splits-table th:first-child { width: 24%; }

.splits-table td {
  height: 58px;
  padding: 4px 0 0;
  border-bottom: 2px solid #e2e2e6;
  white-space: nowrap;
}

small { font-size: 22px; }

/* Map */
.map {
  position: relative;
  flex: 1;
  min-width: 0;
  overflow: hidden;
}

.map-canvas {
  display: block;
  width: 100%;
  height: 100%;
  font-family: Inter, "Liberation Sans", sans-serif;
}

.wood { fill: #aacf81; }
.pale { fill: #c3d6a5; }
.town { fill: #e3e0dc; }
.water { fill: #5a9fd8; }
.hill { fill: none; stroke: #8fae70; stroke-width: 16; opacity: .5; }
.contour { fill: none; stroke: #8a9a78; stroke-width: 3; opacity: .4; }
.pitch { fill: none; stroke: #cfe3b0; stroke-width: 5; }
.stream { fill: none; stroke: #72a9cc; stroke-width: 2; }

.roads { fill: none; stroke: #fff; stroke-linejoin: round; stroke-linecap: round; filter: drop-shadow(0 0 1px #c9c4bd); }
.track { stroke: #e9f6d4; stroke-width: 5; }
.street { stroke-width: 8; stroke: #fdfcfb; }
.lane { stroke-width: 13; stroke: #f8f5f3; }
.avenue { stroke-width: 19; }
.main { stroke-width: 24; }
.trunk { stroke-width: 13; }
.junction { stroke-width: 6; }

.route { fill: none; stroke: #ee2f20; stroke-width: 20; stroke-linejoin: round; stroke-linecap: round; }

.map-canvas text { paint-order: stroke; stroke: rgba(255, 255, 255, .85); stroke-width: 4px; stroke-linejoin: round; text-anchor: middle; }
.map-canvas .from-left { text-anchor: start; }
.district { font-size: 27px; font-weight: 300; fill: #8d8d8f; }
.park { font-size: 20px; font-weight: 600; fill: #455f2b; }
.poi { font-size: 20px; font-weight: 500; fill: #8f8f96; }
.map-canvas .street-name text { font-size: 21px; fill: #3f3f3f; text-anchor: start; }
.map-canvas .elevation-name text { font-size: 18px; fill: #77776f; text-anchor: start; stroke-width: 3px; }
.shield { font-size: 19px; }
.shield rect { fill: #fff; stroke: #8c8c8c; stroke-width: 2; }
.map-canvas .shield text { fill: #444; stroke: none; }

.zoom-control {
  position: absolute;
  top: 20px;
  left: 20px;
  display: flex;
  flex-direction: column;
  width: 55px;
  border: 2px solid #8e9a84;
  border-radius: 8px;
  overflow: hidden;
}

.zoom-control button {
  height: 52px;
  padding: 0;
  border: 0;
  background: #fff;
}

.zoom-control button + button { border-top: 1px solid #ddd; }
.zoom-control svg { width: 16px; height: 16px; stroke: #333; stroke-width: 4; }

.map-actions {
  position: absolute;
  top: 20px;
  right: 32px;
  display: flex;
  gap: 16px;
}

.map-button {
  display: flex;
  align-items: center;
  justify-content: center;
  height: 59px;
  border: 2px solid #d5d5de;
  border-radius: 8px;
  background: #f5f5fa;
}

.map-style {
  gap: 16px;
  padding: 0 28px 0 18px;
  color: #3e7dbb;
  font: 24px/32px "Liberation Sans", Arial, sans-serif;
}

.caret { width: 16px; height: 8px; fill: #222; }
.fullscreen { width: 57px; padding: 0; }
.fullscreen svg { width: 30px; height: 30px; fill: #222; }

.attribution {
  position: absolute;
  right: 0;
  bottom: 0;
  margin: 0;
  padding: 4px 12px 4px 8px;
  background: rgba(255, 255, 255, .5);
  font: 24px/32px "Liberation Sans", Arial, sans-serif;
}

.attribution a { color: #404040; text-decoration: none; }
.attribution .improve { font-weight: 700; }

/* Divider */
.resizer {
  display: flex;
  justify-content: center;
  height: 20px;
  padding-top: 4px;
  background: #f4f4f9;
  border-right: 2px solid #cdcdd8;
  border-bottom: 2px solid #cdcdd8;
}

.resizer svg { width: 20px; height: 11px; stroke: #bcbcbc; stroke-width: 2; }

/* Chart */
.analysis {
  padding-bottom: 4px;
  background: #fefefe;
  border-right: 2px solid #cdcdd8;
}

.chart { display: block; width: 100%; font-size: 21px; }
.grid { fill: none; stroke: #ececec; stroke-width: 2; }
.axis { fill: none; stroke: #a6a6a8; stroke-width: 2; }
.pace { fill: none; stroke: #58a9d8; stroke-linejoin: round; }
.pace path { stroke-width: 3px; vector-effect: non-scaling-stroke; }
.elevation { opacity: .15; }
.tick { fill: #999; }
.y-left { text-anchor: end; }
.x-axis { text-anchor: middle; }

/* Averages */
.stats {
  width: 73%;
  margin: 36px 0 0 278px;
  border-collapse: collapse;
  table-layout: fixed;
  text-align: center;
}

.col-name { width: 190px; }
.col-pace { width: 311px; }
.col-gap { width: 296px; }
.col-heart { width: 384px; }

.stats th, .stats td { padding: 0; font-weight: 400; }
.stats thead { color: #5c5c60; }
.stats thead tr { border-bottom: 2px solid #e2e2e2; }
.stats thead label { display: block; line-height: 38px; }
.stats tbody th, .stats tbody td { padding-top: 24px; }

.switch {
  position: relative;
  display: block;
  width: 80px;
  height: 36px;
  margin: 0 auto 18px;
}

.switch-on { width: 84px; }

.switch input {
  appearance: none;
  display: flex;
  align-items: flex-start;
  width: 100%;
  height: 28px;
  margin: 4px 0 0;
  border-radius: 14px;
  background: #dadada;
  box-shadow: inset 0 2px 2px #aaa;
}

.switch input:checked {
  justify-content: flex-end;
  background: #57a446;
  box-shadow: inset 0 2px 2px #41803a;
}

.switch input::before {
  content: "";
  width: 36px;
  height: 36px;
  margin-top: -3px;
  border: 1px solid #e6e6e6;
  border-radius: 50%;
  background: linear-gradient(#fff, #eee);
  box-shadow: 0 2px 3px rgba(0, 0, 0, .3);
}

.switch span {
  position: absolute;
  top: 0;
  left: 10px;
  color: #fff;
  font-size: 21px;
  font-weight: 700;
  line-height: 32px;
  pointer-events: none;
}
```
FILE: chart.js
```js
// Draws each data series as a smooth curve that never overshoots its points.
document.querySelectorAll('.chart [data-points]').forEach(function (path) {
  var pts = path.dataset.points.split(',').map(function (p) {
    return p.split(' ').map(Number);
  });
  var n = pts.length;
  var slopes = [];
  for (var i = 0; i < n - 1; i++) {
    slopes.push((pts[i + 1][1] - pts[i][1]) / (pts[i + 1][0] - pts[i][0]));
  }
  var tangents = pts.map(function (p, i) {
    if (i === 0) return slopes[0];
    if (i === n - 1) return slopes[n - 2];
    var a = slopes[i - 1], b = slopes[i];
    return a * b <= 0 ? 0 : 2 * a * b / (a + b);
  });
  var d = 'M' + pts[0].join(' ');
  for (i = 0; i < n - 1; i++) {
    var h = (pts[i + 1][0] - pts[i][0]) / 3;
    d += 'C' + [
      pts[i][0] + h, pts[i][1] + tangents[i] * h,
      pts[i + 1][0] - h, pts[i + 1][1] - tangents[i + 1] * h,
      pts[i + 1][0], pts[i + 1][1]
    ].join(' ');
  }
  if (path.dataset.base) {
    d += 'V' + path.dataset.base + 'H' + pts[0][0] + 'Z';
  }
  path.setAttribute('d', d);
});
```
